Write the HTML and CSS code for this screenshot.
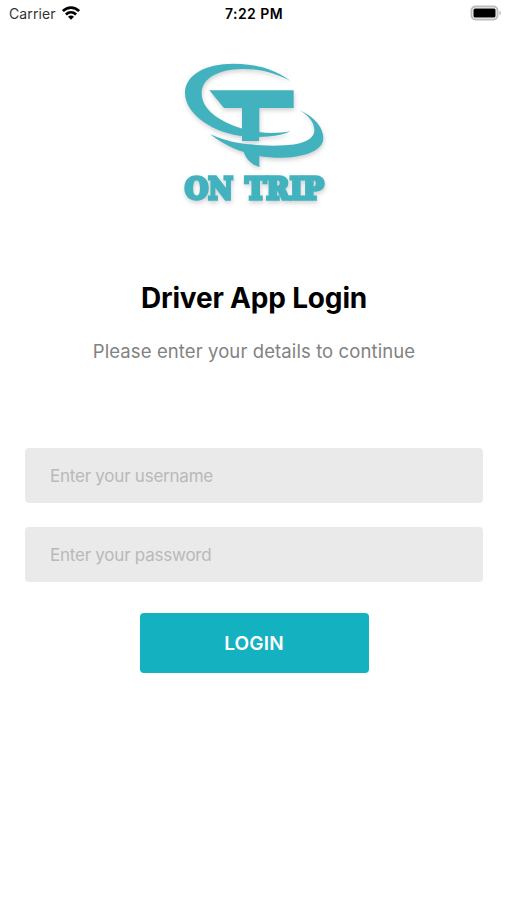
FILE: index.html
```html
<!DOCTYPE html>
<html lang="en">
<head>
<meta charset="utf-8">
<title>Driver App Login</title>
<link rel="stylesheet" href="styles.css">
</head>
<body>
<header class="status">
  <div class="status-left"><span class="carrier">Carrier</span>
    <svg class="wifi" viewBox="0 0 18 14" width="18" height="14"><g fill="none" stroke="#000" stroke-width="2.7"><path d="M.9 5.1C5.6.5 12.4.5 17.1 5.1"/><path d="M3.9 8.4c3-2.8 7.2-2.8 10.2 0"/></g><path d="M6 10.8c1.8-1.6 4.2-1.6 6 0L9 13.8z"/></svg>
  </div>
  <span class="time">7:22 PM</span>
  <svg class="battery" viewBox="0 0 32 16" width="32" height="16"><rect x="1.5" y="1.5" width="26" height="13" rx="4" fill="#fff" stroke="#bcbcbc" stroke-width="1.9"/><rect x="3.5" y="3.6" width="22" height="8.8" rx="1.5"/><path d="M29.4 5.8c2.2.8 2.2 3.6 0 4.4z" fill="#bcbcbc"/></svg>
</header>
<main class="login">
  <svg class="logo" viewBox="0 0 510 510" width="170" height="170" role="img" aria-label="On Trip">
    <g class="mark">
      <path d="M362 93C310 55 252 41 190 41C105 41 45 75 45 129C45 195 135 252 225 259C280 264 330 259 362 244C315 252 262 250 220 237C145 215 95 177 95 130C95 85 145 58 215 57C270 56 318 70 362 93Z"/>
      <path d="M118 121H371V174H268V246L267 273H216V174H162Z"/>
      <path d="M388 180C436 202 460 234 460 265C460 301 405 322 340 323C322 324 288 322 268 318V351C244 344 228 327 221 306C185 295 150 276 120 252C165 273 205 280 240 283C280 288 315 288 345 286C395 284 430 270 433 244C434 219 418 198 388 180Z"/>
      <g class="wordmark"><text x="44" y="448" textLength="145" lengthAdjust="spacingAndGlyphs">ON</text><text x="226" y="448" textLength="236" lengthAdjust="spacingAndGlyphs">TRIP</text></g>
    </g>
  </svg>
  <h1>Driver App Login</h1>
  <p>Please enter your details to continue</p>
  <form>
    <input type="text" placeholder="Enter your username" aria-label="Username">
    <input type="password" placeholder="Enter your password" aria-label="Password">
    <button type="button">LOGIN</button>
  </form>
</main>
</body>
</html>
```
FILE: styles.css
```css
* { box-sizing: border-box; }
body {
  margin: 0;
  min-height: 900px;
  background: #fff;
  color: #000;
  font-family: Inter, "Liberation Sans", sans-serif;
}
.status {
  display: grid;
  grid-template-columns: 1fr auto 1fr;
  align-items: center;
  height: 28px;
  padding: 0 5px 0 9px;
  font-size: 14px;
  line-height: 28px;
}
.status-left { display: flex; align-items: center; gap: 6px; }
.carrier { color: #333; letter-spacing: 0.1px; }
.wifi { margin-top: -2px; }
.time { font-weight: 600; letter-spacing: 0.45px; margin-right: 3px; }
.battery { justify-self: end; margin-top: -2px; }
.login {
  display: flex;
  flex-direction: column;
  align-items: center;
  padding: 22px 24px 0 25px;
}
.logo { display: block; overflow: visible; margin-left: 2px; }
.mark { fill: #42b3be; filter: drop-shadow(2px 7px 6px rgba(0, 0, 0, 0.18)); }
.wordmark {
  font-family: "DejaVu Serif", serif;
  font-weight: 700;
  font-size: 87px;
  stroke: #42b3be;
  stroke-width: 10px;
}
h1 {
  margin: 61px 0 0;
  font-size: 28px;
  line-height: 34px;
  font-weight: 700;
  letter-spacing: -0.18px;
}
p {
  margin: 24px 0 0;
  color: #828282;
  font-size: 18.5px;
  line-height: 24px;
  letter-spacing: 0.1px;
}
form {
  display: flex;
  flex-direction: column;
  align-items: center;
  width: 100%;
  margin-top: 85px;
}
input {
  width: 100%;
  height: 55px;
  margin: 0 0 24px;
  padding: 0 25px;
  border: 0;
  border-radius: 4px;
  background: #eaeaea;
  font: 400 17px/24px Inter, "Liberation Sans", sans-serif;
  letter-spacing: -0.23px;
}
input::placeholder { color: #b9b9b9; opacity: 1; }
button {
  width: 229px;
  height: 60px;
  margin-top: 7px;
  padding: 2px 0 0;
  border: 0;
  border-radius: 4px;
  background: #14b1c1;
  color: #fff;
  font: 600 19px/24px Inter, "Liberation Sans", sans-serif;
  letter-spacing: 0.2px;
}
```
